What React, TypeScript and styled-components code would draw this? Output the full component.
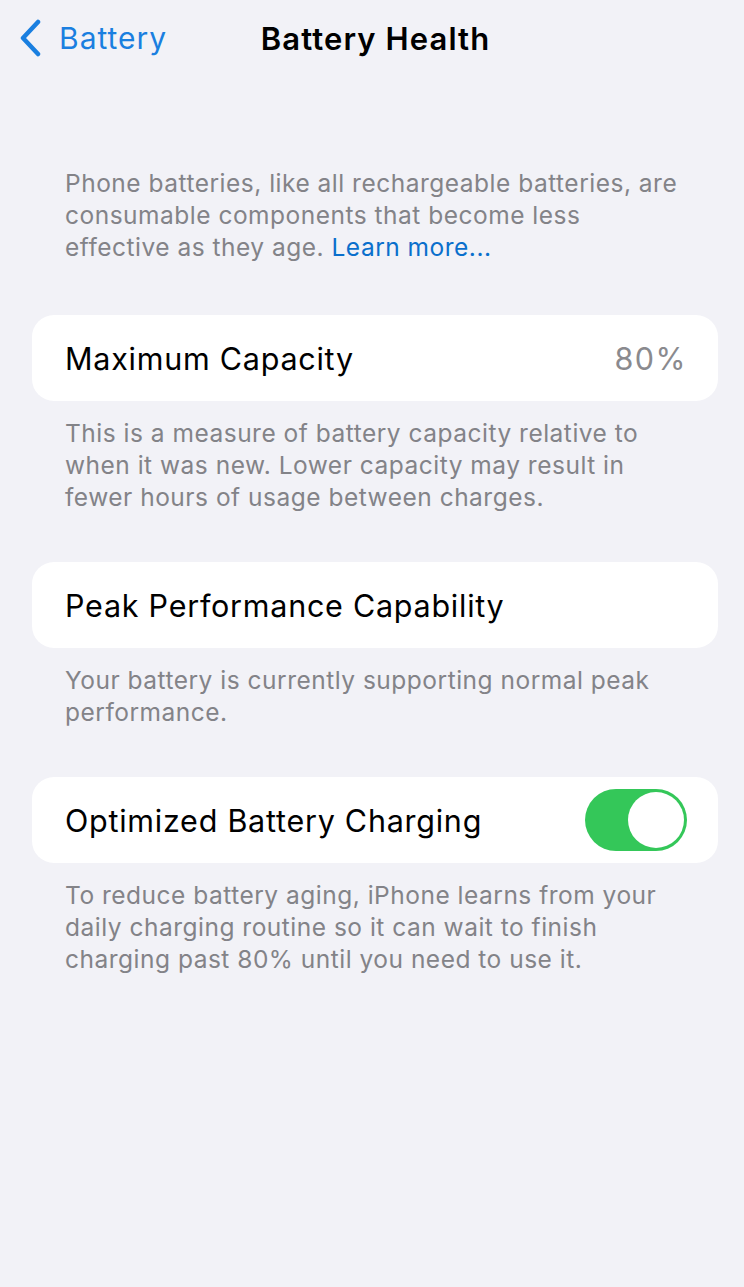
import React from "react";
import styled, { createGlobalStyle } from "styled-components";

const Global = createGlobalStyle`
  html, body { margin: 0; padding: 0; background: #f2f2f7; }
  body { font-family: Inter, "Noto Sans", sans-serif; -webkit-font-smoothing: antialiased; }
`;

const Page = styled.div`
  width: 744px;
  min-height: 1287px;
  background: #f2f2f7;
  display: flex;
  flex-direction: column;
`;

const NavBar = styled.div`
  height: 76px;
  position: relative;
  display: flex;
  align-items: center;
`;

const Back = styled.div`
  display: flex;
  align-items: center;
  gap: 17px;
  padding-left: 18px;
  color: #1a7fe0;
  font-size: 30px;
  letter-spacing: 1px;
`;

const Title = styled.div`
  position: absolute;
  left: 0;
  right: 0;
  text-align: center;
  font-size: 31px;
  font-weight: 600;
  letter-spacing: 1.1px;
  color: #000;
  padding-left: 7px;
  pointer-events: none;
`;

const Content = styled.div`
  display: flex;
  flex-direction: column;
  padding: 0 26px 0 32px;
`;

const Footer = styled.p<{ $top: number }>`
  margin: ${(p) => p.$top}px 0 0;
  padding: 0 30px 0 33px;
  font-size: 24.5px;
  line-height: 32px;
  color: #838388;
  letter-spacing: 0.5px;
`;

const Link = styled.span`
  color: #0a6fcc;
`;

const Card = styled.div<{ $top: number }>`
  margin-top: ${(p) => p.$top}px;
  height: 86px;
  background: #fff;
  border-radius: 22px;
  display: flex;
  align-items: center;
  justify-content: space-between;
  padding: 0 31px 0 33px;
`;

const Label = styled.span`
  font-size: 30.5px;
  letter-spacing: 0.75px;
  color: #000;
`;

const Value = styled.span`
  font-size: 30.5px;
  letter-spacing: 1.5px;
  color: #8a8a8e;
`;

const Switch = styled.div`
  width: 102px;
  height: 62px;
  border-radius: 31px;
  background: #34c759;
  display: flex;
  align-items: center;
  justify-content: flex-end;
  padding: 3px;
  box-sizing: border-box;
`;

const Knob = styled.div`
  width: 56px;
  height: 56px;
  border-radius: 50%;
  background: #fff;
`;

export default function App() {
  return (
    <Page>
      <Global />
      <NavBar>
        <Back>
          <svg width="24" height="38" viewBox="0 0 24 38">
            <path d="M20 3 L5 19 L20 35" fill="none" stroke="#1a7fe0" strokeWidth="4.5" strokeLinecap="round" strokeLinejoin="round" />
          </svg>
          <span>Battery</span>
        </Back>
        <Title>Battery Health</Title>
      </NavBar>
      <Content>
        <Footer $top={91}>
          Phone batteries, like all rechargeable batteries, are consumable components that become less effective as they age. <Link>Learn more...</Link>
        </Footer>
        <Card $top={52}>
          <Label>Maximum Capacity</Label>
          <Value>80%</Value>
        </Card>
        <Footer $top={16}>
          This is a measure of battery capacity relative to when it was new. Lower capacity may result in fewer hours of usage between charges.
        </Footer>
        <Card $top={49}>
          <Label>Peak Performance Capability</Label>
        </Card>
        <Footer $top={16}>
          Your battery is currently supporting normal peak performance.
        </Footer>
        <Card $top={49}>
          <Label>Optimized Battery Charging</Label>
          <Switch>
            <Knob />
          </Switch>
        </Card>
        <Footer $top={16}>
          To reduce battery aging, iPhone learns from your daily charging routine so it can wait to finish charging past 80% until you need to use it.
        </Footer>
      </Content>
    </Page>
  );
}
